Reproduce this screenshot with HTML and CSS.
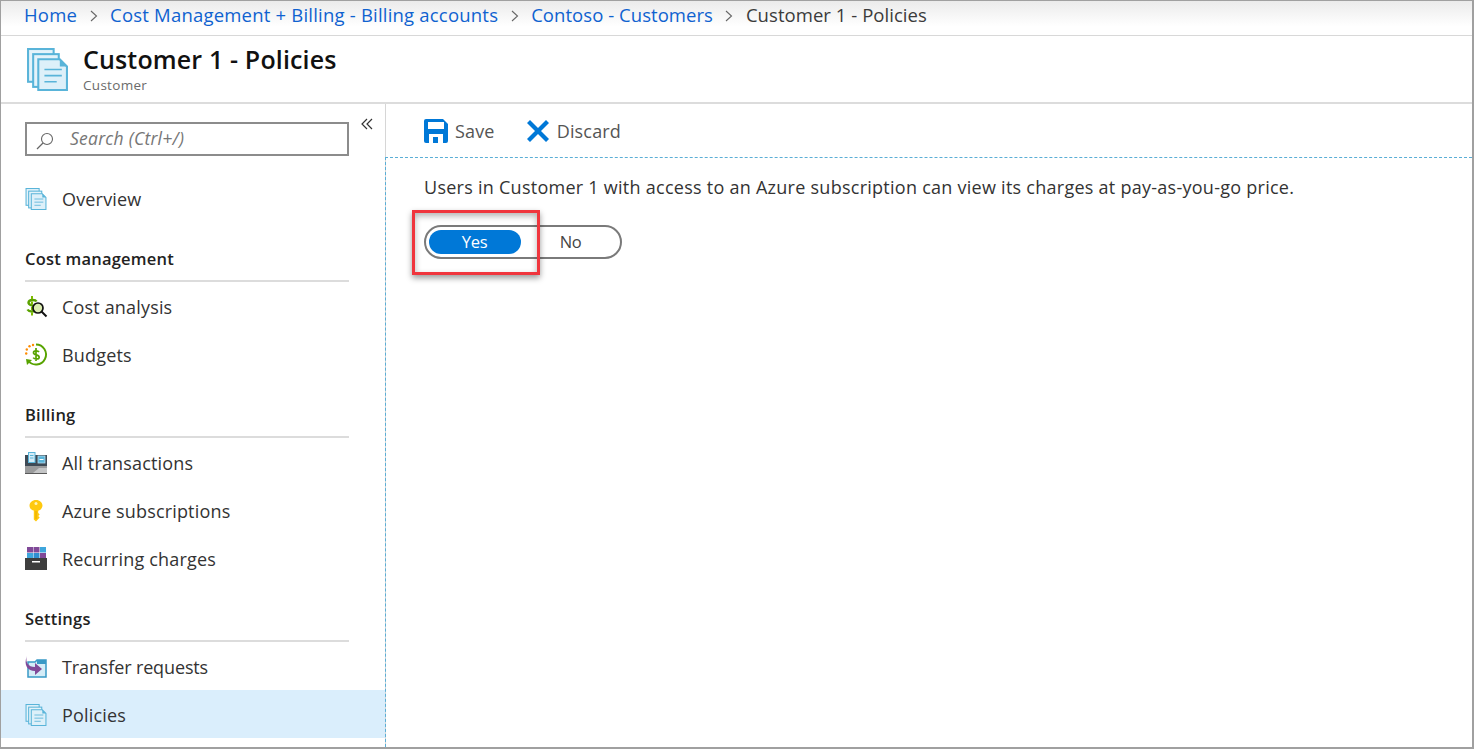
FILE: index.html
```html
<!DOCTYPE html>
<html lang="en">
<head>
<meta charset="utf-8">
<title>Customer 1 - Policies</title>
<link rel="stylesheet" href="styles.css">
</head>
<body>
<svg class="defs" width="0" height="0" aria-hidden="true">
  <defs>
    <symbol id="pages" viewBox="0 0 40 42">
      <rect x="1" y="1" width="25" height="32" fill="#e4f3fa" stroke="#59b4d9" stroke-width="2"/>
      <rect x="6" y="6" width="25" height="32" fill="#e4f3fa" stroke="#59b4d9" stroke-width="2"/>
      <path d="M11 11H32L39 18V41H11Z" fill="#ddf0f9" stroke="#59b4d9" stroke-width="2"/>
      <path d="M32 11V18H39Z" fill="#59b4d9"/>
      <path d="M17 21H34M17 27H34M17 33H29" stroke="#59b4d9" stroke-width="1.6" fill="none"/>
    </symbol>
  </defs>
</svg>
<div class="frame">
  <nav class="crumbs">
    <a>Home</a><svg class="chev" viewBox="0 0 8 12"><path d="M1 1l5.500 5L1 11" fill="none" stroke="#666" stroke-width="1.100"/></svg>
    <a>Cost Management + Billing - Billing accounts</a><svg class="chev" viewBox="0 0 8 12"><path d="M1 1l5.500 5L1 11" fill="none" stroke="#666" stroke-width="1.100"/></svg>
    <a class="tight">Contoso - Customers</a><svg class="chev" viewBox="0 0 8 12"><path d="M1 1l5.500 5L1 11" fill="none" stroke="#666" stroke-width="1.100"/></svg>
    <span class="tight">Customer 1 - Policies</span>
  </nav>
  <header class="head">
    <svg class="head-icon"><use href="#pages"/></svg>
    <div>
      <h1>Customer 1 - Policies</h1>
      <p>Customer</p>
    </div>
  </header>
  <div class="body">
    <aside class="side">
      <div class="search-row">
        <div class="search">
          <svg class="search-icon" viewBox="0 0 18 18"><circle cx="11" cy="7" r="5.500" fill="none" stroke="#666" stroke-width="1.100"/><path d="M7 11l-6 6" stroke="#666" stroke-width="1.200"/></svg>
          <span>Search (Ctrl+/)</span>
        </div>
        <svg class="collapse" viewBox="0 0 12 12"><path d="M6 1L1 6l5 5M11 1L6 6l5 5" fill="none" stroke="#333" stroke-width="1.200"/></svg>
      </div>
      <a class="item"><svg class="ico"><use href="#pages"/></svg>Overview</a>
      <h2 class="sect">Cost management</h2>
      <a class="item">
        <svg class="ico" viewBox="0 0 22 22"><path d="M11.500 5.500C10.500 3.500 4 3 3.500 6.500 3 10 11 9 10.500 13 10 16.500 4 16 2.500 13.500" fill="none" stroke="#5ba300" stroke-width="2.400"/><path d="M7 0v19.500" stroke="#7fba00" stroke-width="2" stroke-dasharray="3 2.500"/><circle cx="13" cy="12" r="5" fill="#dcedb0" stroke="#111" stroke-width="1.700"/><path d="M16.500 15.500l5 5" stroke="#111" stroke-width="2"/></svg>
        Cost analysis</a>
      <a class="item">
        <svg class="ico" viewBox="0 0 22 22"><path d="M11 .5a10 10 0 1 1-8 16" fill="none" stroke="#57a300" stroke-width="1.900"/><path d="M1 15l6 1-5 5Z" fill="#57a300"/><g fill="#ff8c00"><circle cx="8" cy="1" r="1.200"/><circle cx="4.500" cy="2.300" r="1.200"/><circle cx="1.800" cy="5.500" r="1.200"/><circle cx="1.200" cy="9.500" r="1.200"/></g><path d="M14 8C13 6.300 8.500 6.300 8.500 8.700c0 2.800 5.700 1.500 5.700 4.500 0 2.300-4.800 2.200-6 .4M11 4v13" fill="none" stroke="#57a300" stroke-width="1.700"/></svg>
        Budgets</a>
      <h2 class="sect">Billing</h2>
      <a class="item">
        <svg class="ico" viewBox="0 0 22 22"><rect y="3" width="22" height="12" fill="#3e4a55"/><rect x="3.500" y=".5" width="6.500" height="10" fill="#d5edf8" stroke="#59b4d9"/><path d="M5 3.500h3.500M5 6h3.500" stroke="#59b4d9"/><rect x="13" y="4" width="7" height="7" fill="#59b4d9" stroke="#b3def2" stroke-width=".8"/><rect x="14.500" y="7" width="4" height="1" fill="#fff"/><rect y="14" width="22" height="8" fill="#9a9b9c"/><path d="M8 21l6-5h8v5Z" fill="#c4c5c6"/><rect y="21" width="22" height="1" fill="#5a5a5a"/></svg>
        All transactions</a>
      <a class="item">
        <svg class="ico" viewBox="0 0 22 22"><path d="M11 0c3.800 0 6.500 2.500 6.500 5.500 0 2.500-1.800 4.500-4.300 5.200V13l1.500 1.500-1.500 1.500 1.500 1.500-3.700 4-2.200-2v-9C6 10 4.500 8 4.500 5.500 4.500 2.500 7.200 0 11 0Z" fill="#ffc90e"/><circle cx="11" cy="3.500" r="1.500" fill="#fff4b8"/><path d="M11 11v8" stroke="#e6a800" stroke-width="1"/></svg>
        Azure subscriptions</a>
      <a class="item">
        <svg class="ico" viewBox="0 0 22 22"><rect x="2" y="-1" width="6" height="5.500" fill="#804998"/><rect x="8.500" y="-1" width="6" height="5.500" fill="#804998"/><rect x="15" y="-1" width="6" height="5.500" fill="#3ea6dc"/><rect x="2" y="5" width="6" height="5.500" fill="#3ea6dc"/><rect x="8.500" y="5" width="6" height="5.500" fill="#2f8fd0"/><rect x="15" y="5" width="6" height="5.500" fill="#804998"/><rect y="10" width="22" height="12" fill="#3e3e3e"/><rect x="7" y="13" width="8" height="1.500" fill="#fff"/></svg>
        Recurring charges</a>
      <h2 class="sect">Settings</h2>
      <a class="item">
        <svg class="ico" viewBox="0 0 22 22"><path d="M3 6h7l2-2h9v17H3Z" fill="#d4ecf7" stroke="#3999c6" stroke-width="1.500"/><path d="M12 4h9v4h-9Z" fill="#3999c6"/><path d="M2 0c-2 6 1 11 8 11V7l7 6-7 6v-4C3 15-2 9 2 0Z" fill="#804998"/></svg>
        <span class="snug">Transfer requests</span></a>
      <a class="item active"><svg class="ico"><use href="#pages"/></svg>Policies</a>
    </aside>
    <main class="main">
      <div class="toolbar">
        <button class="tool save" type="button">
          <svg class="save-icon" viewBox="0 0 24 24"><path d="M2 0h17l5 5v17a2 2 0 0 1-2 2H2a2 2 0 0 1-2-2V2a2 2 0 0 1 2-2Z" fill="#0078d7"/><rect x="4" y="3" width="16" height="7" fill="#fff"/><rect x="5" y="15" width="14" height="9" fill="#fff"/><rect x="9" y="18" width="5" height="6" fill="#0078d7"/></svg>
          Save</button>
        <button class="tool discard" type="button">
          <svg class="discard-icon" viewBox="0 0 22 22"><path d="M3 0l8 8 8-8 3 3-8 8 8 8-3 3-8-8-8 8-3-3 8-8-8-8Z" fill="#0078d7"/></svg>
          Discard</button>
      </div>
      <div class="content">
        <p class="desc">Users in Customer 1 with access to an Azure subscription can view its charges at pay-as-you-go price.</p>
        <div class="toggle">
          <span class="opt on">Yes</span>
          <span class="opt">No</span>
        </div>
        <div class="callout"></div>
      </div>
    </main>
  </div>
</div>
</body>
</html>
```
FILE: styles.css
```css
* { box-sizing: border-box; }
html, body { margin: 0; height: 100%; }
body {
  font-family: "Open Sans", "Noto Sans", "Liberation Sans", sans-serif;
  color: #333;
  background: #fff;
  overflow: hidden;
}
.defs { position: absolute; }
.frame {
  width: 1474px;
  height: 749px;
  border: 1px solid #a0a0a0;
  border-width: 1px 2px 2px 1px;
  display: flex;
  flex-direction: column;
  overflow: hidden;
}
.crumbs {
  height: 35px;
  flex: none;
  display: flex;
  align-items: center;
  padding: 0 0 8px 23px;
  font-size: 18.500px;
  letter-spacing: 0.200px;
  background: linear-gradient(#ebebeb, #fff 75%);
  border-bottom: 1px solid #d8d8d8;
}
.crumbs a { color: #0f62d0; }
.crumbs span { color: #3b3b3b; }
.crumbs .tight { letter-spacing: 0.050px; }
.chev { width: 8px; height: 12px; margin: 4px 12.500px 0 12.500px; flex: none; }
.head {
  height: 68px;
  flex: none;
  display: flex;
  padding: 9px 0 0 26px;
  gap: 15px;
  border-bottom: 2px solid #dcdcdc;
}
.head-icon { width: 41px; height: 43px; margin-top: 3px; }
.head h1 {
  margin: 0;
  font-size: 25px;
  line-height: 28px;
  font-weight: 600;
  letter-spacing: 0.150px;
  color: #111;
}
.head p {
  margin: 4px 0 0;
  font-size: 13.500px;
  line-height: 17px;
  color: #6b6b6b;
  letter-spacing: 0.300px;
}
.body { flex: 1; display: flex; min-height: 0; }
.side {
  width: 385px;
  flex: none;
  border-right: 1px solid #d6d6d6;
  display: flex;
  flex-direction: column;
}
.search-row {
  display: flex;
  padding: 18px 0 0 24px;
  height: 70px;
  flex: none;
}
.search {
  width: 324px;
  height: 34px;
  border: 2px solid #8c8c8c;
  display: flex;
  align-items: center;
  padding: 0 0 3px 9px;
  gap: 16px;
  font-size: 17.500px;
  font-style: italic;
  color: #767676;
  letter-spacing: 0.250px;
}
.search-icon { width: 18px; height: 18px; margin-top: 6px; }
.collapse { width: 12px; height: 12px; margin: -4px 0 0 12px; }
.item {
  height: 48px;
  flex: none;
  display: flex;
  align-items: center;
  padding: 2px 0 0 24px;
  gap: 15px;
  font-size: 18px;
  letter-spacing: 0.170px;
  color: #333;
}
.item.active { background: #daeefc; }
.snug { letter-spacing: -0.130px; }
.ico { width: 22px; height: 22px; flex: none; overflow: visible; }
.sect {
  margin: 0 36px 0 24px;
  height: 60px;
  flex: none;
  display: flex;
  align-items: flex-end;
  padding-bottom: 10px;
  font-size: 16.500px;
  font-weight: 600;
  letter-spacing: 0.220px;
  color: #222;
  border-bottom: 2px solid #dcdcdc;
}
.main { flex: 1; display: flex; flex-direction: column; min-width: 0; }
.toolbar {
  height: 53px;
  flex: none;
  display: flex;
  align-items: center;
  padding-left: 38px;
}
.tool {
  display: flex;
  align-items: center;
  padding: 0;
  border: 0;
  background: none;
  font: inherit;
  font-size: 18px;
  letter-spacing: 0.170px;
  color: #555;
}
.save { gap: 7px; }
.discard { gap: 8px; margin-left: 32px; }
.save-icon { width: 24px; height: 24px; }
.discard-icon { width: 22px; height: 22px; }
.content {
  flex: 1;
  position: relative;
  padding: 16px 0 0 38px;
  border-top: 1px dashed #5aaed6;
  border-left: 1px dashed #5aaed6;
  margin-left: -1px;
}
.desc {
  margin: 0;
  font-size: 18px;
  line-height: 26px;
  letter-spacing: 0.260px;
  color: #333;
}
.toggle {
  margin-top: 25px;
  width: 198px;
  height: 34px;
  border: 2px solid #7a7a7a;
  border-radius: 17px;
  display: flex;
  align-items: center;
  padding: 0 3px;
}
.opt {
  width: 92px;
  height: 24px;
  padding: 0 1px 2px 0;
  border-radius: 12px;
  display: flex;
  align-items: center;
  justify-content: center;
  font-size: 16.500px;
  letter-spacing: -0.300px;
  color: #444;
}
.opt + .opt { margin-left: 4px; }
.opt.on { background: #0078d7; color: #fff; }
.callout {
  position: absolute;
  left: 26px;
  top: 52px;
  width: 128px;
  height: 65px;
  border: 3px solid #f0353d;
  box-shadow: 0 3px 6px rgba(0,0,0,.4), inset 0 3px 6px rgba(0,0,0,.3);
}
```
